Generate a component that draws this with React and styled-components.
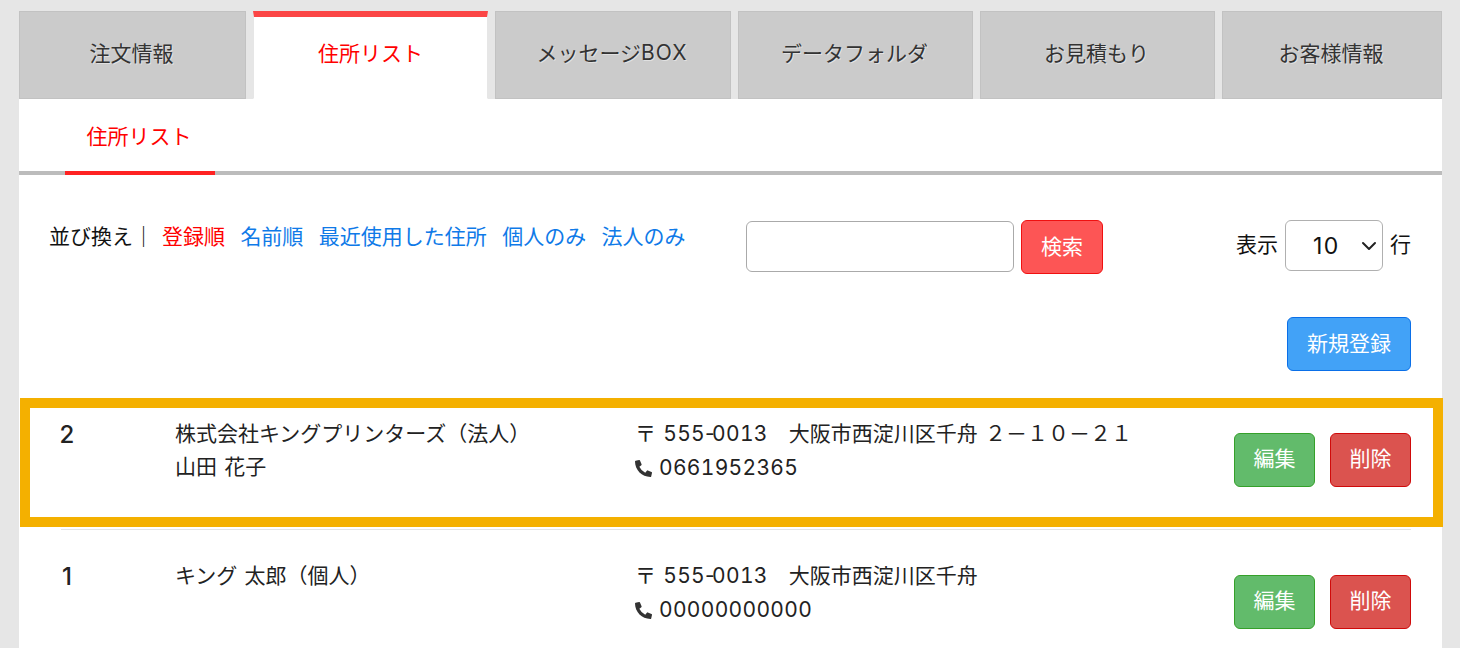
import styled, { createGlobalStyle } from 'styled-components'
import { FaPhoneAlt } from 'react-icons/fa'
import { ChevronDown } from 'lucide-react'

const GlobalStyle = createGlobalStyle`
  * { box-sizing: border-box; }
  html, body { margin: 0; padding: 0; }
  body {
    background: #e6e6e6;
    color: #222;
    font-family: "Noto Sans CJK JP", "Noto Sans", sans-serif;
    font-size: 21px;
  }
`

const Page = styled.div`
  display: flex;
  flex-direction: column;
  height: 648px;
  padding: 11px 18px 0 19px;
  overflow: hidden;
`

const TabBar = styled.nav`
  flex: 0 0 88px;
  display: flex;
  gap: 7px;
`

const Tab = styled.a`
  flex: 0 0 ${props => props.$width}px;
  display: flex;
  align-items: center;
  justify-content: center;
  padding-bottom: ${props => props.$active ? 12 : 6}px;
  padding-right: ${props => props.$active ? 0 : 2}px;
  background: ${props => props.$active ? '#fff' : '#cbcbcb'};
  color: ${props => props.$active ? '#f00' : '#333'};
  border: 1px solid ${props => props.$active ? '#e6e6e6' : '#c2c2c2'};
  border-top: ${props => props.$active ? '6px solid #fb4545' : '1px solid #c2c2c2'};
  border-bottom-color: ${props => props.$active ? '#fff' : '#c2c2c2'};
  text-shadow: ${props => props.$active ? 'none' : '1px 1px 0 rgba(255, 255, 255, 0.45)'};
`

const Panel = styled.main`
  flex: 1 0 auto;
  background: #fff;
`

const SubNav = styled.div`
  height: 76px;
  padding-left: 46px;
  border-bottom: 4px solid #bcbcbc;
`

const SubTab = styled.a`
  display: flex;
  align-items: center;
  justify-content: center;
  width: 150px;
  height: 76px;
  padding-right: 2px;
  color: #f00;
  border-bottom: 4px solid #f22;
`

const Toolbar = styled.div`
  display: flex;
  align-items: flex-start;
  padding: 45px 31px 0;
`

const Sort = styled.div`
  flex: 0 0 696px;
  display: flex;
  gap: 15.4px;
  margin-top: -2px;
  margin-bottom: 2px;
  line-height: 34px;
  color: #111;
`

const SortLabel = styled.span`
  width: 97.6px;
  margin-left: -1px;
  white-space: nowrap;
`

const SortLink = styled.a`
  color: ${props => props.$active ? '#f00' : '#0f7ae8'};
`

const Search = styled.form`
  display: flex;
  align-items: flex-start;
  gap: 7px;
`

const SearchInput = styled.input`
  width: 268px;
  height: 51px;
  margin-top: 1px;
  background: #fff;
  border: 1px solid #aaa;
  border-radius: 6px;
`

const Button = styled.button`
  display: block;
  width: ${props => props.$width || 81}px;
  height: 54px;
  padding: 0 0 5px;
  background: ${props => props.$bg};
  border: 1px solid ${props => props.$line};
  border-radius: 6px;
  color: #fff;
  font: inherit;
`

const Display = styled.div`
  margin-left: auto;
  display: flex;
  align-items: center;
  gap: 7px;
  height: 51px;
  color: #111;
`

const DisplayLabel = styled.span`
  margin-bottom: 6px;
`

const SelectWrap = styled.div`
  position: relative;
  width: 98px;
  height: 51px;
`

const Select = styled.select`
  appearance: none;
  width: 100%;
  height: 100%;
  padding-left: 27px;
  background: #fff;
  border: 1px solid #b0b0b0;
  border-radius: 6px;
  color: #111;
  font: inherit;
  font-family: Inter, sans-serif;
  font-size: 23px;
  letter-spacing: 1.5px;
`

const Chevron = styled(ChevronDown)`
  position: absolute;
  top: 14px;
  right: 2px;
  width: 24px;
  height: 24px;
  color: #222;
  pointer-events: none;
`

const Actions = styled.div`
  display: flex;
  justify-content: flex-end;
  margin-top: 43px;
  padding-right: 31px;
`

const List = styled.div`
  margin: 17px 31px 0 42px;
`

const Row = styled.div`
  position: relative;
  display: grid;
  grid-template-columns: 114px 460px 1fr auto;
  height: 142px;
  padding-top: 28px;
  border-bottom: 1px solid #e4e4e4;
  line-height: 33px;
  word-spacing: 2.5px;
`

const Highlight = styled.div`
  position: absolute;
  top: 10px;
  left: -41px;
  right: -32px;
  height: 129px;
  border: 10px solid #f4b000;
  pointer-events: none;
`

const RowNo = styled.div`
  width: 12px;
  display: flex;
  justify-content: center;
  padding-top: 3px;
  font-family: Inter, sans-serif;
  font-weight: 500;
  font-size: 24px;
  line-height: 32px;
`

const Num = styled.span`
  font-family: Inter, sans-serif;
  font-feature-settings: "tnum";
  letter-spacing: 0.3px;
`

const Hyphen = styled.span`
  font-feature-settings: "tnum" 0;
  letter-spacing: -2.6px;
`

const Latin = styled.span`
  font-family: Inter, sans-serif;
  letter-spacing: 1px;
`

const PhoneIcon = styled(FaPhoneAlt)`
  width: 17px;
  height: 17px;
  margin-right: 7px;
  vertical-align: -2px;
  color: #333;
`

const RowActions = styled.div`
  display: flex;
  gap: 15px;
  padding-top: 17px;
`

const rows = [
  {
    no: 2,
    name: ['株式会社キングプリンターズ（法人）', '山田 花子'],
    zip: ['555', '0013'],
    addr: '大阪市西淀川区千舟 ２－１０－２１',
    tel: '0661952365',
    highlighted: true,
  },
  {
    no: 1,
    name: ['キング 太郎（個人）'],
    zip: ['555', '0013'],
    addr: '大阪市西淀川区千舟',
    tel: '00000000000',
  },
]

const tabs = [
  { label: '注文情報', width: 227 },
  { label: '住所リスト', width: 235, active: true },
  { label: <>メッセージ<Latin>BOX</Latin></>, width: 236 },
  { label: 'データフォルダ', width: 235 },
  { label: 'お見積もり', width: 235 },
  { label: 'お客様情報', width: 220 },
]

const sortLinks = ['登録順', '名前順', '最近使用した住所', '個人のみ', '法人のみ']

const App = () => {
  return (
    <Page>
      <GlobalStyle />
      <TabBar>
        {tabs.map((tab, i) => (
          <Tab key={i} $width={tab.width} $active={tab.active}>{tab.label}</Tab>
        ))}
      </TabBar>
      <Panel>
        <SubNav>
          <SubTab>住所リスト</SubTab>
        </SubNav>
        <Toolbar>
          <Sort>
            <SortLabel>並び換え｜</SortLabel>
            {sortLinks.map((link, i) => (
              <SortLink key={link} $active={i === 0}>{link}</SortLink>
            ))}
          </Sort>
          <Search>
            <SearchInput type="text" />
            <Button type="button" $width={82} $bg="#fd5555" $line="#f01010">検索</Button>
          </Search>
          <Display>
            <DisplayLabel>表示</DisplayLabel>
            <SelectWrap>
              <Select defaultValue="10">
                <option>10</option>
                <option>20</option>
                <option>50</option>
              </Select>
              <Chevron />
            </SelectWrap>
            <DisplayLabel>行</DisplayLabel>
          </Display>
        </Toolbar>
        <Actions>
          <Button type="button" $width={124} $bg="#42a2f7" $line="#0a6fe8">新規登録</Button>
        </Actions>
        <List>
          {rows.map(row => (
            <Row key={row.no}>
              <RowNo>{row.no}</RowNo>
              <div>
                {row.name.map(line => <div key={line}>{line}</div>)}
              </div>
              <div>
                <div>〒 <Num>{row.zip[0]}<Hyphen>-</Hyphen>{row.zip[1]}</Num>　{row.addr}</div>
                <div><PhoneIcon /><Num>{row.tel}</Num></div>
              </div>
              <RowActions>
                <Button type="button" $bg="#62bb6b" $line="#35a02a">編集</Button>
                <Button type="button" $bg="#db534f" $line="#d00a0a">削除</Button>
              </RowActions>
              {row.highlighted && <Highlight />}
            </Row>
          ))}
        </List>
      </Panel>
    </Page>
  )
}

export default App
